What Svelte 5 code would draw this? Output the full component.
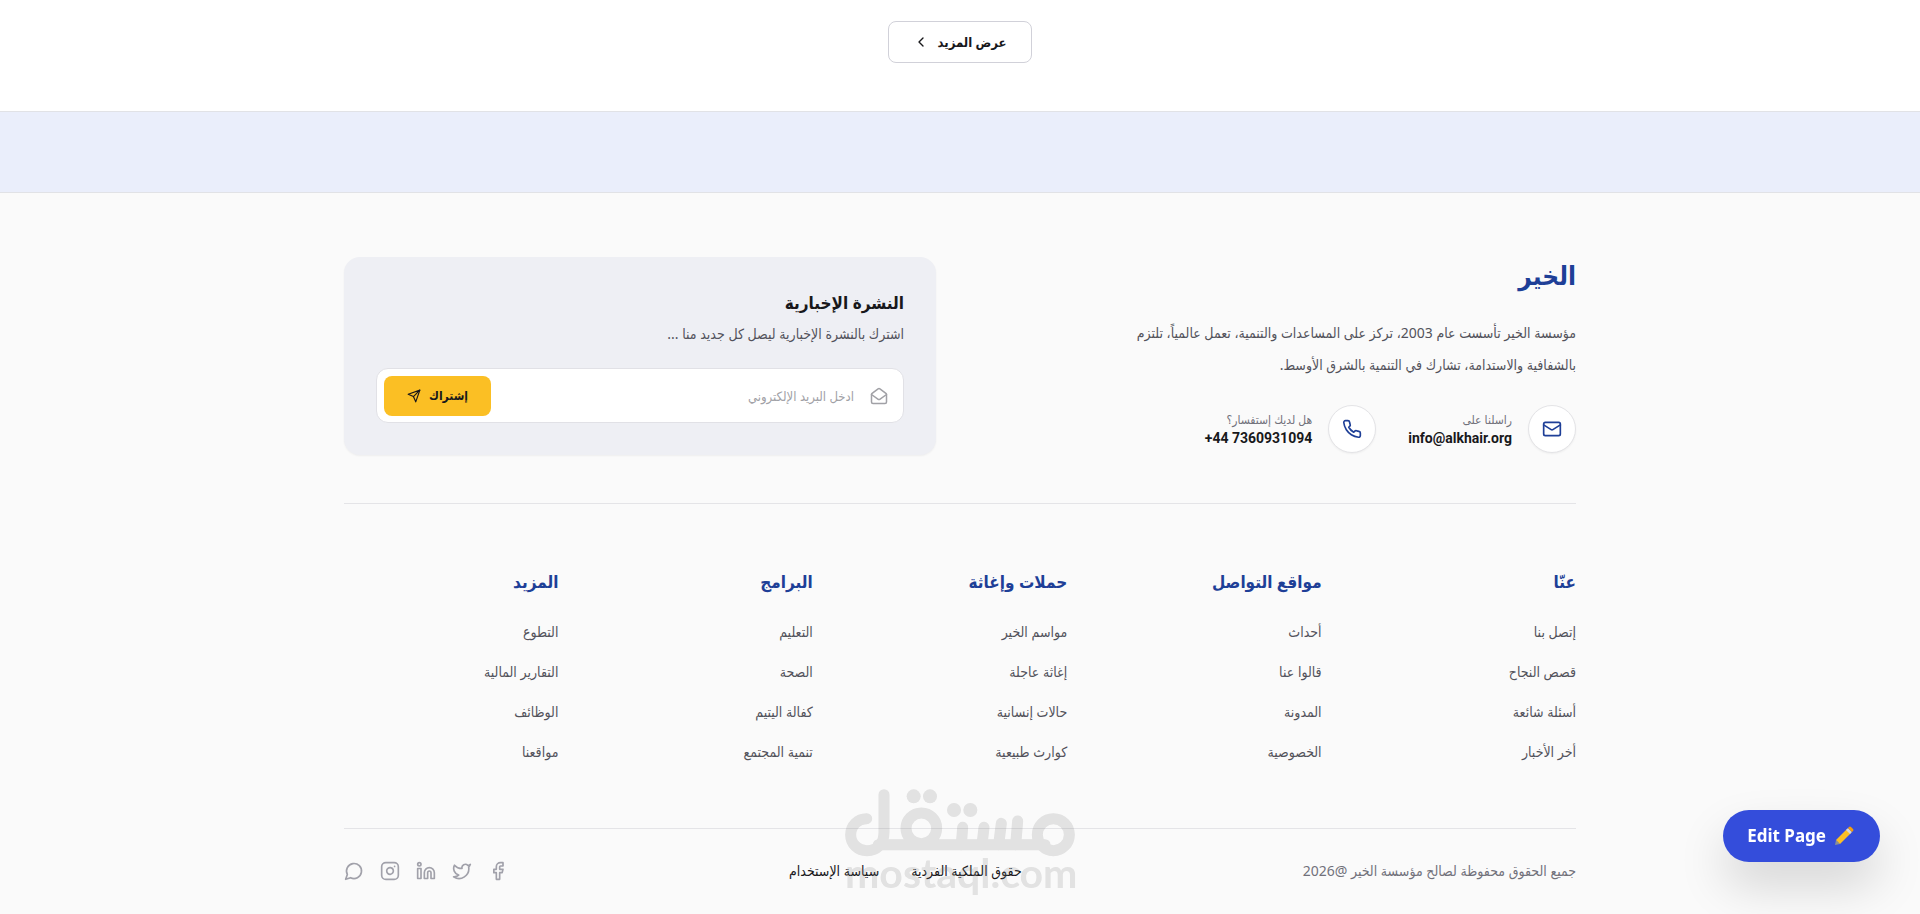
<script>
    let email = $state("");

    const columns = [
        { title: "عنّا", links: ["إتصل بنا", "قصص النجاح", "أسئلة شائعة", "أخر الأخبار"] },
        { title: "مواقع التواصل", links: ["أحداث", "قالوا عنا", "المدونة", "الخصوصية"] },
        { title: "حملات وإغاثة", links: ["مواسم الخير", "إغاثة عاجلة", "حالات إنسانية", "كوارث طبيعية"] },
        { title: "البرامج", links: ["التعليم", "الصحة", "كفالة اليتيم", "تنمية المجتمع"] },
        { title: "المزيد", links: ["التطوع", "التقارير المالية", "الوظائف", "مواقعنا"] }
    ];

    const socials = [
        { name: "Facebook", paths: ["M18 2h-3a5 5 0 0 0-5 5v3H7v4h3v8h4v-8h3l1-4h-4V7a1 1 0 0 1 1-1h3z"] },
        { name: "Twitter", paths: ["M22 4s-.7 2.1-2 3.4c1.6 10-9.4 17.3-18 11.6 2.2.1 4.4-.6 6-2C3 15.5.5 9.6 3 5c2.2 2.6 5.6 4.1 9 4-.9-4.2 4-6.6 7-3.8 1.1 0 3-1.2 3-1.2z"] },
        { name: "LinkedIn", paths: ["M16 8a6 6 0 0 1 6 6v7h-4v-7a2 2 0 0 0-4 0v7h-4v-7a6 6 0 0 1 6-6z", "M2 9h4v12H2z", "M6 4a2 2 0 1 1-4 0 2 2 0 0 1 4 0z"] },
        { name: "Instagram", paths: ["M7 2h10a5 5 0 0 1 5 5v10a5 5 0 0 1-5 5H7a5 5 0 0 1-5-5V7a5 5 0 0 1 5-5z", "M16 11.37A4 4 0 1 1 12.63 8 4 4 0 0 1 16 11.37z", "M17.5 6.5h.01"] },
        { name: "WhatsApp", paths: ["M7.9 20A9 9 0 1 0 4 16.1L2 22Z"] }
    ];
</script>

<div class="page" dir="rtl" lang="ar">
    <section class="more">
        <button class="more-btn">
            عرض المزيد
            <svg class="icon s16" viewBox="0 0 24 24"><path d="m15 18-6-6 6-6" /></svg>
        </button>
    </section>

    <div class="band"></div>

    <footer>
        <div class="container">
            <div class="top">
                <div class="about">
                    <h2>الخير</h2>
                    <p>مؤسسة الخير تأسست عام 2003، تركز على المساعدات والتنمية، تعمل عالمياً، تلتزم بالشفافية والاستدامة، تشارك في التنمية بالشرق الأوسط.</p>
                    <div class="contacts">
                        <div class="contact">
                            <span class="circle">
                                <svg class="icon s20" viewBox="0 0 24 24"><rect width="20" height="16" x="2" y="4" rx="2" /><path d="m22 7-8.97 5.7a1.94 1.94 0 0 1-2.06 0L2 7" /></svg>
                            </span>
                            <div>
                                <span class="label">راسلنا على</span>
                                <a href="mailto:info@alkhair.org" dir="ltr">info@alkhair.org</a>
                            </div>
                        </div>
                        <div class="contact">
                            <span class="circle">
                                <svg class="icon s20" viewBox="0 0 24 24"><path d="M22 16.92v3a2 2 0 0 1-2.18 2 19.79 19.79 0 0 1-8.63-3.07 19.5 19.5 0 0 1-6-6 19.79 19.79 0 0 1-3.07-8.67A2 2 0 0 1 4.11 2h3a2 2 0 0 1 2 1.72 12.84 12.84 0 0 0 .7 2.81 2 2 0 0 1-.45 2.11L8.09 9.91a16 16 0 0 0 6 6l1.27-1.27a2 2 0 0 1 2.11-.45 12.84 12.84 0 0 0 2.81.7A2 2 0 0 1 22 16.92z" /></svg>
                            </span>
                            <div>
                                <span class="label">هل لديك إستفسار؟</span>
                                <a href="tel:+447360931094" dir="ltr">+44 7360931094</a>
                            </div>
                        </div>
                    </div>
                </div>

                <form class="newsletter" onsubmit={(e) => e.preventDefault()}>
                    <h3>النشرة الإخبارية</h3>
                    <p>اشترك بالنشرة الإخبارية ليصل كل جديد منا ...</p>
                    <div class="field">
                        <svg class="icon s18" viewBox="0 0 24 24"><path d="M21.2 8.4c.5.38.8.97.8 1.6v10a2 2 0 0 1-2 2H4a2 2 0 0 1-2-2V10a2 2 0 0 1 .8-1.6l8-6a2 2 0 0 1 2.4 0l8 6Z" /><path d="m22 10-8.97 6.36a2 2 0 0 1-2.06 0L2 10" /></svg>
                        <input type="email" bind:value={email} placeholder="ادخل البريد الإلكتروني" aria-label="ادخل البريد الإلكتروني" />
                        <button>
                            إشتراك
                            <svg class="icon s14" viewBox="0 0 24 24"><path d="m22 2-7 20-4-9-9-4Z" /><path d="M22 2 11 13" /></svg>
                        </button>
                    </div>
                </form>
            </div>

            <nav class="columns">
                {#each columns as column}
                    <div>
                        <h4>{column.title}</h4>
                        <ul>
                            {#each column.links as link}
                                <li><a href="#top">{link}</a></li>
                            {/each}
                        </ul>
                    </div>
                {/each}
            </nav>

            <div class="bottom">
                <p>جميع الحقوق محفوظة لصالح مؤسسة الخير @2026</p>
                <div class="legal">
                    <a href="#rights">حقوق الملكية الفردية</a>
                    <a href="#terms">سياسة الإستخدام</a>
                </div>
                <div class="socials">
                    {#each socials as social}
                        <a href="#social" aria-label={social.name}>
                            <svg class="icon s20" viewBox="0 0 24 24">
                                {#each social.paths as d}<path {d} />{/each}
                            </svg>
                        </a>
                    {/each}
                </div>
            </div>
        </div>
    </footer>

    <div class="watermark" dir="ltr">
        <svg viewBox="0 0 690 204">
            <g fill="none" stroke="#808080" stroke-width="33" stroke-linecap="round">
                <circle cx="625" cy="137" r="48" />
                <circle cx="229" cy="118" r="46" />
                <path d="M117 17V130C117 166 95 185 66 185C38 185 17 164 17 137C17 110 38 89 65 89" />
                <path d="M100 167H600" />
                <path d="M349 167 353 115M411 167 417 115M461 167 469 103M512 167 518 96" />
            </g>
            <g fill="#808080">
                <circle cx="206" cy="22" r="21" />
                <circle cx="255" cy="22" r="21" />
                <circle cx="327" cy="63" r="21" />
                <circle cx="376" cy="63" r="21" />
            </g>
        </svg>
        <span>mostaql.com</span>
    </div>

    <button class="edit" dir="ltr">
        Edit Page
        <svg viewBox="0 0 22 20">
            <path fill="#8a8f96" d="m1 19 1-5 4 4z" />
            <path fill="#fbbf24" d="M2 14 13 3l4 4L6 18z" />
            <path fill="#d5d8dc" d="m12 4 2-2 4 4-2 2z" />
            <path fill="#f59e0b" d="m14 2 1-1q1-1 2 0l2 2q1 1 0 2l-1 1z" />
        </svg>
    </button>
</div>

<style>
    :global(body) { margin: 0; background: #fafafa; }
    .page { font-family: "Noto Sans", "DejaVu Sans Condensed", "DejaVu Sans", sans-serif; font-size: 14px; line-height: 20px; color: #18181b; }
    h2, h3, h4, p, ul { margin: 0; padding: 0; }
    ul { list-style: none; }
    a { color: inherit; text-decoration: none; }
    button { font: inherit; color: inherit; cursor: pointer; }

    .icon { fill: none; stroke: currentColor; stroke-width: 2; stroke-linecap: round; stroke-linejoin: round; display: block; flex: none; }
    .s14 { width: 14px; height: 14px; }
    .s16 { width: 16px; height: 16px; }
    .s18 { width: 18px; height: 18px; }
    .s20 { width: 20px; height: 20px; }

    .more { display: flex; justify-content: center; padding: 21px 0 48px; background: #fff; }
    .more-btn { display: flex; align-items: center; gap: 8px; height: 42px; padding: 0 24px; border: 1px solid #d1d1d9; border-radius: 8px; background: #fff; font-size: 13px; font-weight: 700; }

    .band { height: 80px; background: #eaeefb; border: solid #e1e2e6; border-width: 1px 0; }

    .container { max-width: 1232px; margin: 0 auto; padding: 64px 24px 0; }
    .top { display: grid; grid-template-columns: 1fr 1fr; gap: 48px; padding-bottom: 48px; border-bottom: 1px solid #e4e4e7; }

    h2 { font-size: 26px; line-height: 36px; font-weight: 700; color: #1e3f97; }
    .about p { max-width: 448px; margin: 24px 0; line-height: 32px; color: #52525b; }
    .contacts { display: flex; gap: 32px; }
    .contact { display: flex; align-items: center; gap: 16px; }
    .circle { display: flex; align-items: center; justify-content: center; box-sizing: border-box; width: 48px; height: 48px; border: 1px solid #e4e4e7; border-radius: 50%; background: #fff; color: #1e3f97; box-shadow: 0 1px 2px rgb(0 0 0 / 0.05); }
    .label { display: block; font-size: 12px; line-height: 18px; color: #71717a; }
    .contact a { display: block; font-family: Roboto, sans-serif; font-size: 14px; line-height: 18px; font-weight: 700; }

    .newsletter { padding: 32px; border-radius: 16px; background: #eeeff4; box-shadow: 0 1px 2px rgb(0 0 0 / 0.05); }
    h3 { font-size: 17px; line-height: 28px; font-weight: 700; }
    .newsletter p { margin: 7px 0 24px; color: #52525b; }
    .field { display: flex; align-items: center; gap: 16px; box-sizing: border-box; height: 55px; padding: 0 15px 0 7px; border: 1px solid #e1e1e6; border-radius: 12px; background: #fff; color: #a1a1a6; }
    input { flex: 1; min-width: 0; padding: 0; border: none; outline: none; background: none; font: inherit; font-size: 13px; color: #18181b; }
    input::placeholder { color: #a1a1a6; opacity: 1; }
    .field button { display: flex; align-items: center; gap: 8px; height: 40px; padding: 0 23px; border: none; border-radius: 8px; background: #fbbf24; color: #18181b; font-size: 12px; font-weight: 700; }

    .columns { display: grid; grid-template-columns: repeat(5, 1fr); gap: 40px; padding: 64px 0 66px; border-bottom: 1px solid #e4e4e7; }
    h4 { margin-bottom: 26px; font-size: 17px; line-height: 28px; font-weight: 700; color: #1e3f97; }
    ul { display: grid; gap: 20px; color: #52525b; }

    .bottom { display: flex; align-items: center; justify-content: space-between; padding: 32px 0; }
    .bottom p { color: #71717a; }
    .legal { display: flex; gap: 32px; }
    .socials { display: flex; gap: 16px; color: #a1a1aa; }

    .watermark { position: fixed; left: 50%; bottom: 25px; width: 230px; margin-left: -115px; opacity: 0.2; pointer-events: none; color: #808080; text-align: center; }
    .watermark svg { display: block; width: 100%; }
    .watermark span { display: block; font-family: Lato, sans-serif; font-size: 41px; line-height: 32px; font-weight: 700; }

    .edit { position: fixed; right: 40px; bottom: 52px; display: flex; align-items: center; gap: 8px; height: 52px; padding: 0 24px; border: none; border-radius: 26px; background: #344ddb; color: #fff; font-size: 17px; font-weight: 700; box-shadow: 0 24px 48px rgb(0 0 0 / 0.15); }
    .edit svg { width: 22px; height: 20px; }
</style>
